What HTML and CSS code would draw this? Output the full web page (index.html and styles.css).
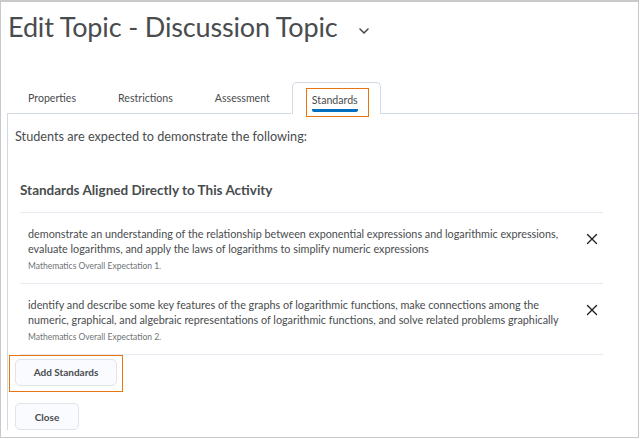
FILE: index.html
```html
<!DOCTYPE html>
<html>
<head>
<meta charset="utf-8">
<link rel="stylesheet" href="styles.css">
</head>
<body>
<div class="frame">
  <div class="title-row">
    <h1 class="title">Edit Topic - Discussion Topic</h1>
    <svg class="chev" width="12" height="8" viewBox="0 0 12 8"><path d="M2 2 L6 6 L10 2" fill="none" stroke="#494c4e" stroke-width="1.6" stroke-linecap="round" stroke-linejoin="round"/></svg>
  </div>
  <div class="tabs">
    <div class="tab">Properties</div>
    <div class="tab">Restrictions</div>
    <div class="tab">Assessment</div>
    <div class="tab active"><span class="focus"><span class="tab-label">Standards</span></span></div>
    <div class="tab-rest"></div>
  </div>
  <div class="panel">
    <p class="intro">Students are expected to demonstrate the following:</p>
    <h2 class="heading">Standards Aligned Directly to This Activity</h2>
    <ul class="list">
      <li class="item">
        <div class="item-body">
          <div class="item-text">demonstrate an understanding of the relationship between exponential expressions and logarithmic expressions, evaluate logarithms, and apply the laws of logarithms to simplify numeric expressions</div>
          <div class="item-meta">Mathematics Overall Expectation 1.</div>
        </div>
        <svg class="close-x" width="12" height="12" viewBox="0 0 12 12"><path d="M1.5 1.5 L10.5 10.5 M10.5 1.5 L1.5 10.5" stroke="#202122" stroke-width="1.4" stroke-linecap="round"/></svg>
      </li>
      <li class="item">
        <div class="item-body">
          <div class="item-text">identify and describe some key features of the graphs of logarithmic functions, make connections among the numeric, graphical, and algebraic representations of logarithmic functions, and solve related problems graphically</div>
          <div class="item-meta">Mathematics Overall Expectation 2.</div>
        </div>
        <svg class="close-x" width="12" height="12" viewBox="0 0 12 12"><path d="M1.5 1.5 L10.5 10.5 M10.5 1.5 L1.5 10.5" stroke="#202122" stroke-width="1.4" stroke-linecap="round"/></svg>
      </li>
    </ul>
    <div class="add-focus"><button class="btn btn-add">Add Standards</button></div>
    <button class="btn btn-close">Close</button>
  </div>
</div>
</body>
</html>
```
FILE: styles.css
```css
* { box-sizing: border-box; }
html, body { margin: 0; padding: 0; background: #fff; }
body { font-family: Lato, "Open Sans", sans-serif; color: #494c4e; }
.frame {
  width: 639px;
  height: 438px;
  border: 1px solid #c9c9c9;
  border-top-width: 2px;
  overflow: hidden;
}
.title-row { display: flex; align-items: center; padding: 6px 0 0 7px; height: 44px; }
.title { margin: 0; font-size: 27px; font-weight: 400; color: #494c4e; line-height: 34px; letter-spacing: -0.15px; }
.chev { margin-left: 20px; margin-top: 8px; }
.tabs { display: flex; align-items: flex-end; margin-top: 36px; padding-left: 6px; height: 32px; }
.tab {
  font-size: 10.6px;
  color: #494c4e;
  padding: 0 21px 9px;
  border-bottom: 1px solid #d3d9e3;
  height: 24px;
  display: flex; align-items: flex-end;
}
.tab.active {
  height: 32px;
  width: 89px;
  border: 1px solid #d3d9e3;
  border-bottom: none;
  border-radius: 5px 5px 0 0;
  padding: 5px 0 0 13px;
  margin-left: 1px;
  align-items: flex-start;
}
.focus { border: 1.5px solid #e87511; padding: 5px 10px 6px 5px; display: block; height: 29px; }
.tab-label { display: block; border-bottom: 3px solid #006fbf; padding-bottom: 3px; border-radius: 2px; }
.tab-rest { flex: 1; border-bottom: 1px solid #d3d9e3; height: 1px; }
.panel { margin-left: 6px; border-left: 1px solid #d3d9e3; padding: 14px 0 0 7px; }
.intro { margin: 0; font-size: 12.7px; line-height: 16px; }
.heading { margin: 38px 0 0 5px; font-size: 13.5px; font-weight: 700; line-height: 16px; color: #494c4e; }
.list { list-style: none; margin: 14px 0 0 5px; padding: 0; width: 583px; border-top: 1px solid #e6eaf0; }
.item { display: flex; align-items: flex-start; padding: 13px 0 10px 8px; border-bottom: 1px solid #e6eaf0; }
.item-body { flex: 1; }
.item-text { font-size: 10.8px; line-height: 15px; color: #494c4e; }
.item-meta { font-size: 8.5px; line-height: 13px; color: #6e7376; margin-top: 4px; }
.close-x { margin: 7px 5px 0 22px; flex: none; }
.add-focus { display: inline-block; border: 1.5px solid #e87511; padding: 2.5px 5px 5.5px; margin-top: 0; margin-left: -6px; }
.btn {
  font-family: Lato, sans-serif;
  font-size: 10px;
  font-weight: 700;
  color: #494c4e;
  background: #f9fbff;
  border: 1px solid #dfe3ea;
  border-radius: 5px;
  height: 27px;
  display: block;
}
.btn-add { width: 102px; }
.btn-close { width: 64px; margin-top: 11px; }
```
